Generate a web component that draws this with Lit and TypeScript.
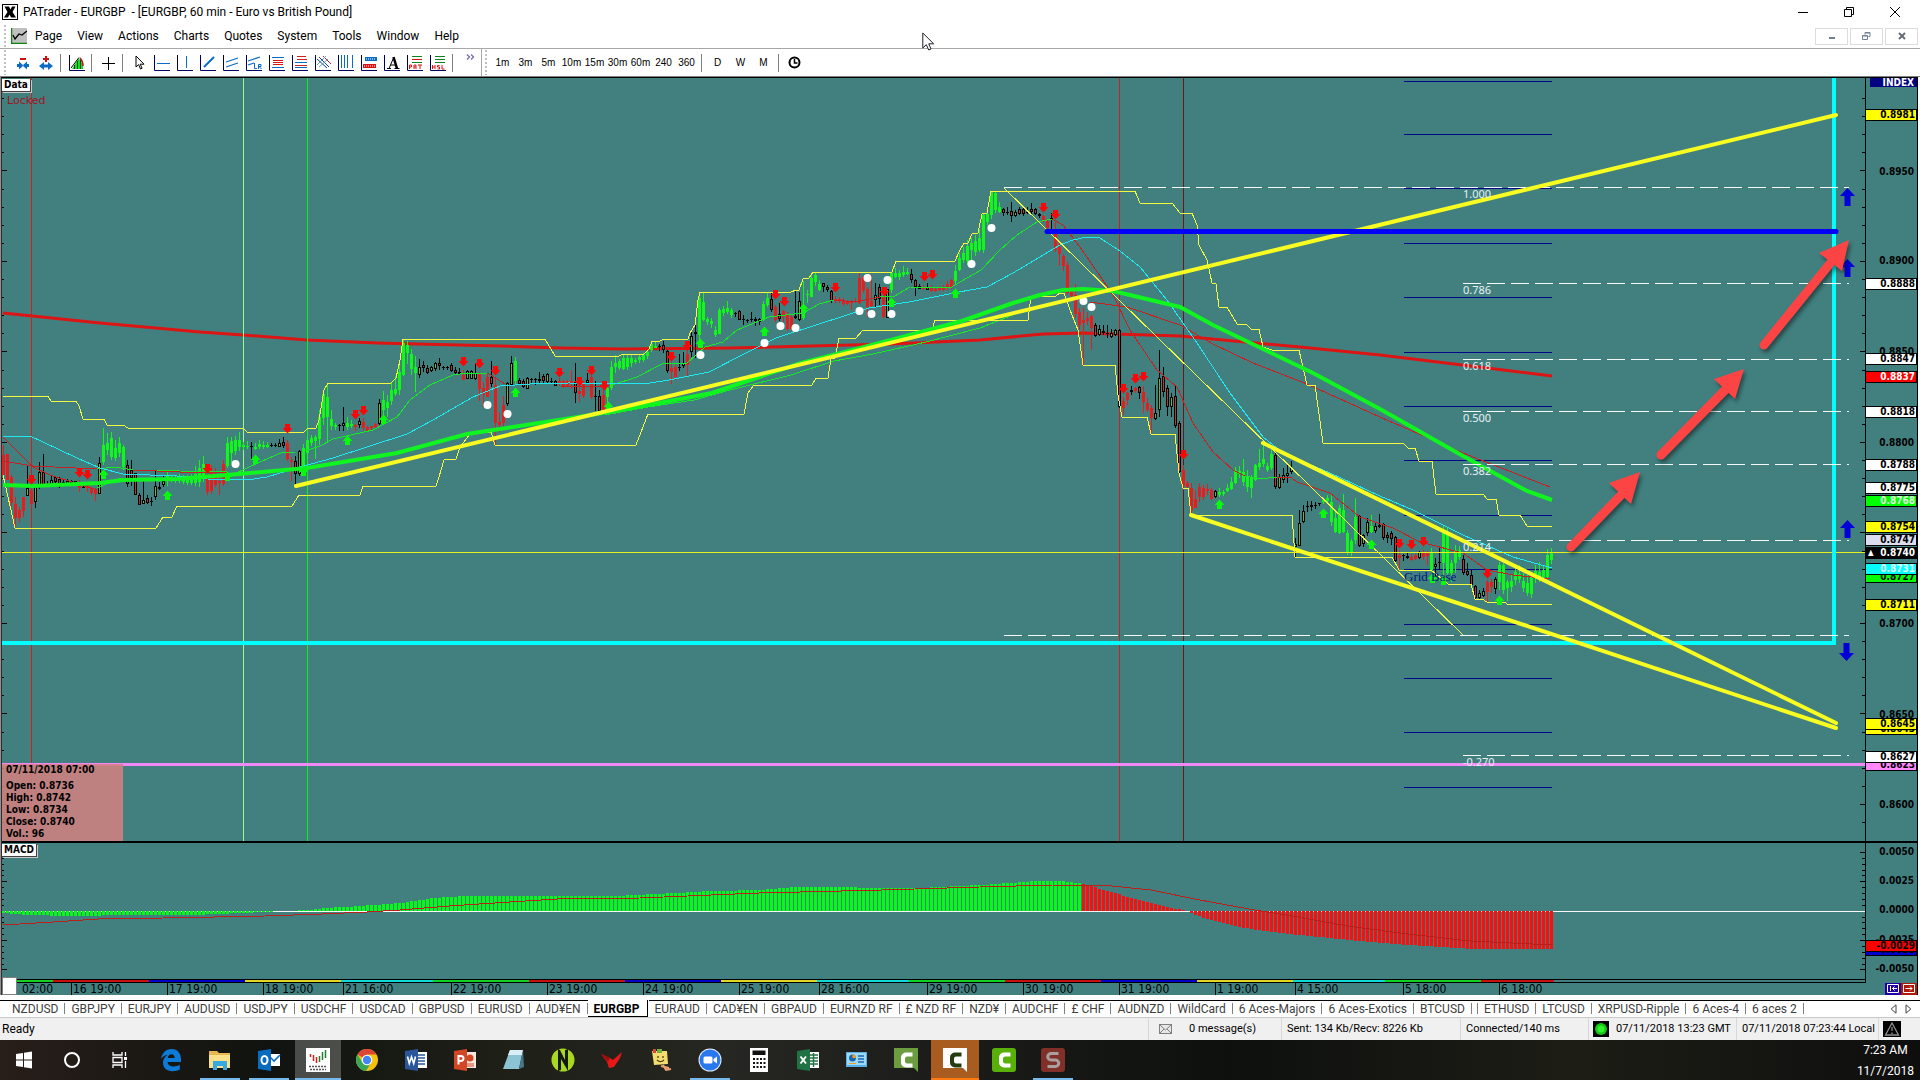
import { LitElement, html, svg, css } from "lit";
import { customElement, state } from "lit/decorators.js";

/* ---------- chart data ---------- */

// Price pane and oscillator pane share one pixel space: x 2..1865.
const X0 = 2;
const W = 1863;
const PRICE = { y: 78, h: 763 };
const MACD = { y: 843, h: 136 };

// kind, high, body top, body bottom, low. g/r = trend bars, G/R = outlined bars, K = doji.
const CANDLES = `
r445 455 475 480,r454 454 480 480,r475 477 503 507,r497 504 518 526,r507 510 518 522,r497 497 511 517,G465 488 496 496,r482 490 504 508,
G485 485 502 508,G462 472 487 489,R454 472 487 487,K481 486 487 487,G475 480 485 486,R476 477 482 486,R477 479 486 488,G479 482 484 486,
G479 481 484 486,R480 481 483 485,R481 481 484 485,r480 484 488 492,K484 487 488 488,r484 485 488 492,r487 488 493 495,r488 490 494 501,
G457 463 494 494,g428 445 462 465,g433 443 450 455,g432 438 457 460,g440 448 458 461,g437 443 453 457,g445 447 467 470,R460 465 484 487,
R460 470 478 486,R473 473 495 495,R493 495 505 505,G481 500 504 504,R495 498 503 504,K497 501 502 506,G470 486 497 500,R482 487 489 490,
G475 481 485 487,g472 476 481 486,g475 477 479 482,g475 478 480 483,g474 477 480 483,g475 478 482 484,g475 480 483 485,g474 479 483 485,
g466 474 483 486,g460 468 482 487,g456 464 478 482,r474 477 492 495,r465 472 491 494,r468 475 485 487,r475 481 483 495,r460 464 484 486,
g437 443 466 468,g437 441 453 463,g436 440 451 455,g432 440 447 451,g442 445 447 450,g441 446 447 449,K442 446 447 459,g443 447 449 450,
g440 444 447 449,g441 445 447 449,g442 445 447 448,K443 445 446 447,K443 445 446 447,G439 443 447 447,R437 442 446 448,r440 443 459 461,
r457 460 462 481,R456 461 474 486,G450 451 474 476,g444 448 469 474,g436 440 453 461,g435 438 443 446,g435 437 441 459,g410 417 439 445,
g390 394 418 425,g385 397 417 443,g410 419 426 430,g423 425 427 430,K424 425 426 431,G407 423 426 431,g417 423 427 430,g420 424 426 428,
r424 425 427 431,G418 421 425 428,r418 422 428 430,r426 427 431 432,r426 426 428 431,r423 424 427 429,G399 403 424 425,g391 400 410 424,
g395 402 408 417,g383 390 401 405,g376 389 394 396,g360 372 390 395,g339 343 375 376,g341 345 353 364,g349 354 369 375,g356 367 373 392,
G359 367 375 378,R361 365 368 372,R365 368 373 374,G366 367 371 372,G362 363 369 371,R358 363 366 370,K366 367 368 370,K366 367 368 370,
R363 365 371 372,R367 370 373 374,R368 372 374 375,r370 375 380 380,G370 371 379 379,G370 371 379 379,G364 373 379 380,r372 373 389 401,
r382 388 395 407,r374 377 397 397,R361 377 384 387,r377 385 423 446,r412 422 425 432,r396 405 423 427,G382 383 404 406,G356 363 385 386,
g357 361 381 384,R378 380 384 385,R379 381 387 388,G377 378 389 389,K378 379 380 384,K378 379 380 385,G372 379 381 384,R374 376 381 383,
G373 374 382 383,K378 381 382 383,R380 381 386 386,r378 381 384 386,r380 381 387 388,r380 381 386 387,r370 381 384 389,R363 382 393 403,
r385 391 394 402,r383 384 396 398,G373 380 383 384,r373 377 397 399,K381 396 397 411,R390 396 411 411,r387 395 410 411,g386 388 397 405,
g361 367 388 390,g355 363 367 373,g359 361 368 370,g354 358 369 370,g355 358 367 370,g355 358 363 367,g358 360 362 364,g355 357 360 363,
g353 355 360 362,g350 352 356 359,g341 344 350 352,g342 346 348 348,K344 346 347 351,R341 345 350 353,R350 351 371 373,r358 368 372 384,
r365 367 377 380,K354 367 368 371,G352 363 366 368,r350 354 365 377,G330 336 352 357,G318 332 334 358,g294 298 335 345,g293 302 320 321,
g317 319 322 325,g318 321 324 328,g326 330 335 337,g308 310 334 334,g306 309 313 316,g301 308 312 314,g308 310 315 318,K312 313 314 317,
R310 311 320 320,K315 319 320 325,K319 320 321 323,K312 319 320 322,G317 319 321 326,G318 319 322 325,g301 304 320 321,g292 298 305 307,
R292 299 310 312,r305 307 320 322,R303 314 319 321,r310 311 317 322,r312 315 329 331,r315 317 329 330,G290 316 318 319,G292 301 320 321,
g281 310 318 320,g290 294 295 303,g275 278 297 297,g273 275 282 286,g280 284 290 291,R283 283 287 292,R285 287 290 292,R290 291 301 303,
r296 299 301 303,r297 299 301 303,r298 301 304 306,r300 301 304 305,r300 302 303 310,r298 301 302 303,r272 278 303 304,r276 277 290 293,
r287 289 307 317,r275 301 306 308,G283 295 300 307,R284 287 299 305,r294 296 317 318,G289 289 318 318,g272 273 290 293,g268 273 277 278,
g270 273 277 280,g266 272 275 277,g268 272 274 275,R269 274 280 283,R279 280 287 296,R284 286 289 289,r285 287 289 290,R283 287 290 290,
r285 288 291 292,r287 289 291 292,r286 288 290 291,r285 287 290 291,r281 284 288 290,r279 280 287 289,g265 271 281 284,g253 258 270 271,
g247 253 260 263,g240 246 261 265,g238 243 250 262,g235 241 252 256,g229 238 250 252,g213 215 250 253,g213 214 222 225,g191 192 215 219,
g191 193 210 213,g202 207 212 213,R208 209 213 216,R207 212 213 215,R202 211 216 222,G210 212 216 217,R207 209 214 215,R206 209 214 216,
K207 212 213 214,R203 209 212 215,R208 209 214 215,R213 214 216 218,r215 216 221 222,r220 221 228 229,K213 218 219 232,r222 232 250 252,
r243 247 254 266,r254 256 266 271,r262 265 293 295,r288 290 296 298,r284 295 314 318,r308 312 325 330,r308 320 323 365,r312 318 321 325,
r315 316 328 350,R323 325 336 337,G325 329 335 336,R325 331 333 335,K325 333 334 338,G329 333 337 338,G329 330 335 336,R329 330 407 408,
r397 401 408 415,r392 393 400 405,G386 390 392 395,r387 388 391 393,R386 387 393 399,r386 392 402 413,r398 403 410 412,r405 408 418 433,
G385 413 419 420,G350 378 410 417,R367 376 392 397,R385 388 407 416,G393 397 407 417,R386 396 426 428,R421 423 472 473,r465 470 486 490,
r481 483 487 489,r483 488 510 513,r490 499 508 508,r483 487 497 502,r485 488 497 500,r484 489 491 495,r488 490 499 500,G490 491 497 498,
g488 492 495 497,g490 492 494 496,g484 488 491 492,g477 482 489 490,g467 470 483 484,g466 471 474 478,g459 472 482 486,g470 477 487 492,
g475 478 488 498,g464 465 480 481,g449 463 467 470,g444 459 464 467,g463 466 470 472,g450 454 468 470,R453 455 487 489,G474 477 488 489,
G468 475 480 483,G465 473 476 483,G461 468 472 474,G538 544 547 557,G510 523 546 546,G505 511 522 523,R501 506 507 512,R501 505 507 511,
K502 505 506 509,R503 503 504 506,g498 500 502 504,g495 498 501 502,g495 502 522 526,g512 518 532 533,g505 508 533 534,g494 510 532 533,
g530 533 553 555,g539 541 552 556,g498 517 540 544,R515 516 546 547,G534 535 544 547,G518 522 533 536,g515 526 532 533,G522 526 531 533,
R514 525 527 528,R523 524 538 540,R532 535 538 543,R531 533 539 545,R536 537 561 562,r550 555 558 569,K554 555 556 561,R552 556 558 559,
r554 557 560 561,r554 555 559 560,G551 552 558 559,r550 552 557 560,r551 552 556 565,g548 552 570 572,G558 564 567 576,K548 562 563 570,
g525 530 563 578,g528 533 573 575,g560 563 573 582,g545 550 563 573,g546 550 557 560,R555 559 573 575,R563 571 575 576,R570 575 585 586,
R585 586 598 600,G590 593 598 599,G588 591 596 597,r580 582 592 602,r579 582 587 593,G577 579 589 594,g562 565 582 590,g563 565 590 594,
g580 582 588 601,g575 581 587 592,g567 572 580 585,g565 574 579 583,g573 581 588 592,g575 583 593 596,g574 577 594 598,g565 571 577 583,
g562 572 577 582,g565 570 577 580,g549 555 577 579,g548 553 560 564`
  .trim()
  .split(/,\s*/)
  .map((c) => ({ kind: c[0], v: c.slice(1).split(" ").map(Number) }));

const LINES: { cls: string; pts: string }[] = [
  { cls: "ma-red", pts: "3,313 100,323 200,332 243,335 307,340 377,343 500,346 560,348 623,349 730,348 891,344 980,340 1043,334 1083,333 1180,336 1300,347 1380,355 1552,376" },
  { cls: "thin green", pts: "97,488 120,478 177,478 232,475 260,462 283,452 295,452" },
  { cls: "thin green", pts: "302,452 320,446 333,439 373,430 397,417 410,400 430,385 453,375 467,373 487,373" },
  { cls: "thin green", pts: "612,385 637,377 662,364 687,363 705,347 723,342 737,330 769,317 803,313 819,304 834,300" },
  { cls: "thin green", pts: "880,297 895,296 910,287 950,288 960,282 981,270 1000,250 1017,235 1037,222 1052,219" },
  { cls: "thin green", pts: "97,469 115,467 133,470 227,472" },
  { cls: "thin green", pts: "605,415 648,407 694,400 730,390 791,375 834,361 873,354 926,342 980,328 1030,308" },
  { cls: "thin red", pts: "3,437 33,467 50,475 97,490" },
  { cls: "thin red", pts: "3,461 33,466 97,469" },
  { cls: "thin red", pts: "133,470 180,472 227,472" },
  { cls: "thin red", pts: "487,373 491,375 505,384" },
  { cls: "thin red", pts: "560,386 605,387" },
  { cls: "thin red", pts: "834,300 855,302 880,297" },
  { cls: "thin red", pts: "1052,219 1063,225 1080,247 1113,295 1130,330 1157,370 1177,387 1193,423 1213,452 1233,470 1245,476" },
  { cls: "thin green", pts: "1245,476 1260,479 1277,477" },
  { cls: "thin red", pts: "1277,477 1292,478 1297,482 1330,493 1360,517 1393,528 1420,542 1463,553 1487,570 1513,575 1550,579" },
  { cls: "thin red", pts: "1090,302 1127,307 1180,325 1213,344 1253,363 1307,384 1380,417 1463,453 1550,487" },
  { cls: "thin cyan", pts: "3,436 30,436 43,442 77,458 100,468 123,474 177,476 207,479 247,480 267,477 300,467 333,458 367,447 407,434 433,420 473,397 500,386 530,384 569,383 644,384 669,380 709,372 744,354 776,338 819,324 869,308 909,302 959,292 987,287 1013,273 1060,245 1073,240 1087,237 1100,238 1120,251 1140,267 1167,300 1197,343 1230,393 1263,437 1283,453 1330,473 1380,496 1413,510 1463,535 1513,557 1552,568" },
  { cls: "ma-green", pts: "3,485 33,486 100,483 123,480 177,479 227,475 307,468 397,453 467,434 500,429 591,415 659,403 712,393 759,377 801,363 837,354 891,340 962,321 1013,303 1040,295 1063,290 1083,289 1113,291 1180,307 1213,325 1263,349 1313,373 1380,409 1433,439 1463,456 1527,491 1552,500" },
  { cls: "thin yellow", pts: "3,396 48,396 51,401 76,401 79,406 83,419 104,419 107,425 123,425 128,428 243,428 247,432 304,432 308,428 316,428 319,420 324,390 328,383 391,383 396,378 400,360 403,339 545,339 555,356 619,356 623,354 644,354 649,349 652,341 660,341 664,339 688,339 690,333 695,325 698,300 700,292 791,292 796,290 799,290 803,279 809,278 813,272 892,272 896,261 955,261 960,250 964,243 968,243 972,234 978,233 982,214 987,213 991,191 1135,191 1140,203 1172,203 1180,213 1192,213 1197,225 1199,245 1207,260 1212,283 1216,284 1219,307 1227,307 1237,324 1247,325 1251,329 1259,329 1263,347 1272,350 1299,350 1307,385 1315,385 1323,443 1403,443 1408,448 1415,448 1419,461 1432,461 1436,494 1483,494 1487,499 1496,499 1499,515 1520,515 1527,526 1552,526" },
  { cls: "thin yellow", pts: "3,475 15,528 156,528 163,517 172,517 177,506 292,506 299,495 360,495 363,486 436,486 439,477 444,460 456,459 460,447 470,434 491,432 495,445 636,445 648,414 744,414 748,393 754,385 812,385 816,378 828,378 831,358 835,358 839,338 856,338 863,330 932,330 935,320 1028,320 1031,296 1056,296 1060,293 1064,293 1070,310 1078,330 1083,365 1115,365 1118,395 1122,417 1147,417 1151,434 1175,434 1179,473 1183,488 1188,488 1191,515 1292,515 1295,557 1392,557 1399,570 1431,570 1448,584 1471,584 1475,599 1482,599 1487,602 1505,602 1507,604 1552,604" },
  { cls: "thin fan", pts: "1004,188 1463,635" },
];

const DOWN = [[31,479],[79,472],[87,474],[207,468],[287,428],[355,414],[363,410],[463,361],[479,363],[495,370],[559,372],[579,381],[591,370],[604,385],[671,356],[687,345],[775,294],[784,301],[835,287],[884,291],[924,276],[932,274],[1043,207],[1055,214],[1123,388],[1135,378],[1143,376],[1183,454],[1399,543],[1411,544],[1423,541],[1487,573]];
const UP = [[103,474],[167,495],[227,476],[255,459],[303,471],[347,440],[383,419],[515,392],[608,406],[700,343],[764,331],[803,308],[891,302],[955,293],[1219,504],[1323,513],[1371,544],[1432,578],[1443,580],[1499,600]];
const DOTS = [[235,464],[487,405],[507,414],[700,355],[764,343],[780,326],[795,328],[867,278],[859,311],[871,314],[891,314],[887,280],[971,264],[991,228],[1083,301],[1091,307]];

const GRID = [81,134,188,243,297,352,406,460,515,569,624,678,732,787];
const FIBS: [string, number, number][] = [
  ["1.000", 187, 1004], ["0.786", 283, 1463], ["0.618", 359, 1463], ["0.500", 411, 1463],
  ["0.382", 464, 1463], ["0.214", 540, 1463], ["", 635, 1004], ["-0.270", 755, 1463],
];

const SCALE: [string, number][] = [
  ["0.8950", 172], ["0.8900", 261], ["0.8850", 352], ["0.8800", 443],
  ["0.8700", 624], ["0.8650", 715], ["0.8600", 805],
];
const TAGS: [string, number, string][] = [
  ["0.8981", 115, "yellow"], ["0.8888", 284, "white"], ["0.8847", 359, "white"], ["0.8837", 377, "red"],
  ["0.8818", 412, "white"], ["0.8788", 465, "white"], ["0.8775", 488, "white"], ["0.8768", 501, "lime"],
  ["0.8754", 527, "yellow"], ["0.8747", 540, "pale"], ["0.8740", 553, "black"], ["0.8727", 577, "green"],
  ["0.8731", 569, "cyan"], ["0.8711", 605, "yellow"], ["0.8643", 729, "yellow"], ["0.8645", 724, "yellow"],
  ["0.8623", 765, "pink"], ["0.8627", 757, "white"],
];
const MACD_SCALE: [string, number][] = [["0.0050", 852], ["0.0025", 881], ["0.0000", 910], ["-0.0025", 940], ["-0.0050", 969]];
const MACD_TAGS: [string, number, string][] = [["-0.0033", 950, "blue"], ["-0.0029", 946, "redk"]];

const HIST = [[3,913],[25,915],[70,916],[130,915],[190,915],[240,913],[262,912],[285,911],[310,910],[322,908],[345,907],[400,903],[433,898],[461,896],[612,896],[673,893],[710,891],[759,890],[796,887],[918,888],[980,885],[1035,881],[1060,881],[1083,884],[1102,890],[1127,897],[1163,906],[1185,911],[1200,917],[1225,924],[1249,929],[1298,935],[1347,940],[1408,945],[1470,949],[1552,949]];
const SIGNAL = "3,925 53,922 98,919 163,918 265,916 322,914 367,912 400,910 449,906 510,902 557,899 640,898 759,893 882,890 980,887 1053,885 1102,885 1151,890 1200,900 1249,909 1298,917 1347,926 1408,934 1470,941 1552,945";
const histAt = (x: number) => {
  let i = 1;
  while (i < HIST.length - 1 && HIST[i][0] < x) i++;
  const [x1, y1] = HIST[i - 1];
  const [x2, y2] = HIST[i];
  return Math.round(y1 + ((y2 - y1) * (x - x1)) / (x2 - x1));
};

const DAYS: [string, number][] = [
  ["#10d020", 53], ["#c81010", 149], ["#0000c8", 245], ["#e0d820", 341], ["#10d8d8", 433], ["#10d020", 529],
  ["#c81010", 625], ["#0000c8", 721], ["#e0d820", 817], ["#10d8d8", 909], ["#10d020", 1005], ["#c81010", 1101],
  ["#0000c8", 1197], ["#e0d820", 1293], ["#10d8d8", 1385], ["#10d020", 1481], ["#c81010", 1554],
];
const TIMES: [string, number][] = [
  ["02:00", 20], ["16 19:00", 71], ["17 19:00", 167], ["18 19:00", 263], ["21 16:00", 343], ["22 19:00", 451],
  ["23 19:00", 547], ["24 19:00", 643], ["25 19:00", 739], ["28 16:00", 819], ["29 19:00", 927], ["30 19:00", 1023],
  ["31 19:00", 1119], ["1 19:00", 1215], ["4 15:00", 1295], ["5 18:00", 1403], ["6 18:00", 1499],
];

const TABS = ["NZDUSD","GBPJPY","EURJPY","AUDUSD","USDJPY","USDCHF","USDCAD","GBPUSD","EURUSD","AUD¥EN","EURGBP","EURAUD","CAD¥EN","GBPAUD","EURNZD RF","£ NZD RF","NZD¥","AUDCHF","£ CHF","AUDNZD","WildCard","6 Aces-Majors","6 Aces-Exotics","BTCUSD","","ETHUSD","LTCUSD","XRPUSD-Ripple","6 Aces-4","6 aces 2"];

const px = (x: number) => `${((x - X0) / W) * 100}%`;
const py = (p: { y: number; h: number }, y: number) => `${((y - p.y) / p.h) * 100}%`;

/* ---------- icons ---------- */

const axis = svg`<path d="M.5 0V15.500H16" fill="none" stroke="#000060"/>`;
const ic = (body: unknown) => html`<svg class="i16" viewBox="0 0 16 16" aria-hidden="true">${body}</svg>`;
const TOOLS: [string, unknown][] = [
  ["Compress bars", ic(svg`<rect x="5" y="3" width="6" height="2" fill="#d01010"/><path d="M2 10.500h4M10 10.500h4" stroke="#0a6cc8" stroke-width="3"/><path d="M4 6.500v8l4.500-4zM12 6.500v8l-4.500-4z" fill="#0a6cc8"/>`)],
  ["Expand bars", ic(svg`<path d="M8 1v6M5 4h6" stroke="#d01010" stroke-width="2"/><path d="M4 11h8" stroke="#0a6cc8" stroke-width="3"/><path d="M6 7v8l-5-4zM10 7v8l5-4z" fill="#0a6cc8"/>`)],
  ["|", null],
  ["Indicators", ic(svg`${axis}<path d="M3 14L9 4c3 0 4 3 5 7v3z" fill="#10e020"/><path d="M2 13L10 2.500" stroke="#000" fill="none"/><path d="M5.500 14V10M8.500 14V6M11.500 14V5" stroke="#084010"/><path d="M11 3c2 2 3 5 3 8" stroke="#c01010" fill="none" stroke-width="1.500"/>`)],
  ["|", null],
  ["Crosshair", ic(svg`<path d="M8.500 2v13M2 8.500h13" stroke="#000"/>`)],
  ["|", null],
  ["Pointer", ic(svg`<path d="M5 1v11l2.600-2.400L9.500 14l1.600-.8-1.900-4H13z" fill="#fff" stroke="#000"/>`)],
  ["Horizontal line", ic(svg`${axis}<path d="M3 8.500h13" stroke="#0a6cc8"/>`)],
  ["Vertical line", ic(svg`${axis}<path d="M9.500 1v12" stroke="#0a6cc8"/>`)],
  ["Trend line", ic(svg`${axis}<path d="M4 12L14 2" stroke="#0a6cc8" stroke-width="2"/>`)],
  ["Channel", ic(svg`${axis}<path d="M3 7l12-4M3 12l12-4" stroke="#0a6cc8" stroke-width="1.200"/>`)],
  ["Linear regression", ic(svg`${axis}<path d="M2 6l12-4M2 10l6-2" stroke="#0a6cc8" stroke-width="1.200"/><path d="M8.500 8v5.500h2.500M12.500 14V9.500h2.500v2h-2l2.500 2.500" fill="none" stroke="#0a6cc8"/>`)],
  ["Fibonacci retracement", ic(svg`${axis}<path d="M3 2.500h12M3 12.500h12" stroke="#0a6cc8"/><path d="M4 5.500h10M4 7.500h10M4 9.500h10" stroke="#e01010"/>`)],
  ["Fibonacci extension", ic(svg`${axis}<path d="M5 1.500h9M5 4.500h10M3 10.500h12" stroke="#d02020"/><path d="M3 7.500h12M3 12.500h12" stroke="#0a6cc8"/>`)],
  ["Fan", ic(svg`${axis}<path d="M2 4l10 9M4 2l10 10" stroke="#1040a0"/><path d="M8 1l8 8" stroke="#c02020"/><path d="M2 10L11 1M4 12L13 4" stroke="#60a0d8"/>`)],
  ["Time zones", ic(svg`${axis}<path d="M3.500 0v13M6.500 0v13M9.500 0v13M14.500 0v13" stroke="#0a6cc8"/>`)],
  ["Zones", ic(svg`${axis}<rect x="4" y="2" width="12" height="4" fill="#0a6cc8"/><path d="M5 4h10" stroke="#fff" stroke-dasharray="1 1"/><rect x="2" y="9" width="13" height="4" fill="#e01010"/><path d="M3 11h11" stroke="#fff" stroke-dasharray="1 1"/>`)],
  ["Text", ic(svg`${axis}<path d="M5 13.500L9.500 3M6.500 10h5" fill="none" stroke="#000"/><path d="M9.500 2l3.500 11.500" stroke="#000" stroke-width="2.500"/><path d="M3 13.500h4M10.500 13.500h5" stroke="#000"/>`)],
  ["PAT levels", ic(svg`${axis}<path d="M5 1.500h10M5 7.500h10" stroke="#108020"/><path d="M5 4.500h10" stroke="#d01010"/><path d="M2.500 14v-4h2v2h-2M7 14v-4h2v4M7 12h2M11 10h4M13 10v4" fill="none" stroke="#e01010"/>`)],
  ["HSL levels", ic(svg`${axis}<path d="M5 1.500h10M5 4.500h10M5 7.500h10" stroke="#108020"/><path d="M2.500 10v4M5 10v4M2.500 12h2.500M9.500 10.500h-2v1.500h2v2h-2M12 10v4h2.500" fill="none" stroke="#e01010"/>`)],
  ["|", null],
];

const t24 = (body: unknown) => html`<svg class="i24" viewBox="0 0 24 24" aria-hidden="true">${body}</svg>`;
const camC = (c: string) => svg`<path d="M18.500 4.500H12a5 5 0 0 0-5 5v5a5 5 0 0 0 5 5h6.500v-4h-5.300a2.200 2.200 0 0 1-2.200-2.200v-2.600a2.200 2.200 0 0 1 2.200-2.200h5.300z" fill="${c}"/>`;
const APPS: [string, string, unknown][] = [
  ["Start", "sys", t24(svg`<path d="M4 6l7-1v6.500H4zM12 4.800L20 3.600v7.900h-8zM4 12.500h7V19l-7-1zM12 12.500h8v7.900l-8-1.200z" fill="#fff"/>`)],
  ["Search", "sys", t24(svg`<circle cx="12" cy="12" r="7" fill="none" stroke="#fff" stroke-width="2"/>`)],
  ["Task view", "sys last", t24(svg`<path d="M5 4v3h9V4M5 20v-3h9v3M5 9.500h9v5H5zM17.500 4v4M17.500 13v7" fill="none" stroke="#fff" stroke-width="1.300"/><rect x="16" y="9" width="3" height="3" fill="#fff"/>`)],
  ["Edge", "", t24(svg`<path d="M2 11C3 5 7 1 12.500 1 19 1 22 6 22 11v3H8.500c.3 3 3 4.500 6 4.500 2.500 0 4.700-.7 6.300-1.700v4.700c-2 1-4.500 1.700-7.300 1.700C8 23.200 4 20 4 14.500c0-3 1.700-5.800 4.500-7.400C5.500 7.200 3.200 9 2 11zm6.700-1h7c0-2.200-1.200-3.700-3.300-3.700-2 0-3.300 1.600-3.700 3.700z" fill="#0c7cd8"/>`)],
  ["File Explorer", "run", t24(svg`<path d="M1 3h8l2 2h11v14H1z" fill="#e8b850"/><path d="M1 7h21v13H1z" fill="#fbe08c"/><path d="M5 22v-9h14v9h-4v-4H9v4z" fill="#38a8e0"/>`)],
  ["Outlook", "run", t24(svg`<rect x="11" y="6" width="12" height="12" fill="#fff"/><path d="M12 8l5 5 6-6" fill="none" stroke="#0a6cc8" stroke-width="1.600"/><path d="M1 3l13-2v22L1 21z" fill="#0a6cc0"/><ellipse cx="7.500" cy="12" rx="3" ry="4" fill="none" stroke="#fff" stroke-width="2"/>`)],
  ["PATrader", "active run", t24(svg`<rect width="24" height="24" fill="#fff"/><path d="M4.500 6v3M7.500 7v6M10.500 9v6" stroke="#d02020" stroke-width="1.500"/><path d="M13.500 8v6M16.500 4v8M19.500 2v8" stroke="#208030" stroke-width="1.500"/><path d="M3 18.500h18M4 21.500h16" stroke="#555" stroke-width="1.400" stroke-dasharray="2 1"/>`)],
  ["Chrome", "", t24(svg`<circle cx="12" cy="12" r="11" fill="#f4c20d"/><path d="M12 12L2.500 6.500A11 11 0 0 1 21.600 6.600H12z" fill="#db4437"/><path d="M2.500 6.500A11 11 0 0 0 11 23l5-8.500-8.500 0z" fill="#3aa757"/><circle cx="12" cy="12" r="5.300" fill="#fff"/><circle cx="12" cy="12" r="4.200" fill="#4285f4"/>`)],
  ["Word", "", t24(svg`<rect x="11" y="4" width="12" height="16" fill="#fff"/><path d="M13 7h8M13 10h8M13 13h8M13 16h8" stroke="#2b579a" stroke-width="1.400"/><path d="M1 3l13-2v22L1 21z" fill="#2b579a"/><path d="M3.500 8.500L5.300 15.500 7.500 9l2.200 6.500 1.800-7" fill="none" stroke="#fff" stroke-width="1.600"/>`)],
  ["PowerPoint", "", t24(svg`<rect x="11" y="4" width="12" height="16" fill="#f8e8e0"/><circle cx="17" cy="10" r="3.500" fill="#d24726"/><path d="M14 16h7M14 18h7" stroke="#d24726"/><path d="M1 3l13-2v22L1 21z" fill="#d24726"/><path d="M5.500 16.500V8H8a2.500 2.500 0 0 1 0 5H5.500" fill="none" stroke="#fff" stroke-width="2"/>`)],
  ["Notepad", "", t24(svg`<path d="M8 2h13l-4 19H1z" fill="#8cc4d4"/><path d="M8 2h13l-1 5H6z" fill="#d8eef4"/><path d="M21 2l1 17-5 2z" fill="#487888"/>`)],
  ["NinjaTrader", "", t24(svg`<circle cx="12" cy="12" r="11.500" fill="#a8d820"/><path d="M7 1v22l3-1V11l7 12V1l-3 1v10L9 2z" fill="#141810"/>`)],
  ["Red Bird", "", t24(svg`<path d="M1 6l9 4 3 2 9-8-2 6-6 9-5 1-2-6z" fill="#e81818"/><path d="M1 6l9 4-2 4z" fill="#a00c0c"/>`)],
  ["Sticky Notes", "", t24(svg`<path d="M3 3h15l1 13-14 1z" fill="#f4dc70"/><path d="M8 1h5v4H8z" fill="#70b040"/><path d="M4 1h3v4H4z" fill="#d84830"/><path d="M9 8v2M14 8v2M8 12c2 2 5 2 7 0" stroke="#504010" fill="none" stroke-width="1.300"/><path d="M14 17l3 5 5-1M12 18l8 2" stroke="#e8a070" stroke-width="2" fill="none"/>`)],
  ["Zoom", "run", t24(svg`<circle cx="12" cy="12" r="11.500" fill="#e8f0ff"/><circle cx="12" cy="12" r="10.500" fill="#2878f0"/><rect x="5.500" y="8.500" width="9" height="7" rx="1.500" fill="#fff"/><path d="M15.500 11l3.500-2.500v7L15.500 13z" fill="#fff"/>`)],
  ["Calculator", "", t24(svg`<path d="M3 0h18v24H3z" fill="#fff"/><path d="M5.500 2.500h13V7h-13z" fill="#111"/><path d="M6 11h13M6 15h13M6 19h13" stroke="#111" stroke-width="2" stroke-dasharray="2 1.500"/>`)],
  ["Excel", "", t24(svg`<rect x="11" y="4" width="12" height="16" fill="#fff"/><path d="M13 7h9M13 10h9M13 13h9M13 16h9M17.500 5v14" stroke="#217346" stroke-width="1.400"/><path d="M1 3l13-2v22L1 21z" fill="#217346"/><path d="M4.500 8.500l5.500 7M10 8.500l-5.500 7" stroke="#fff" stroke-width="1.900"/>`)],
  ["Control Panel", "", t24(svg`<rect x="1" y="4" width="21" height="15" fill="#58b0e8"/><rect x="2" y="5" width="19" height="12" fill="#a0d8f8"/><circle cx="7.500" cy="10" r="3.500" fill="#1868b0"/><path d="M7.500 10V6.500A3.500 3.500 0 0 1 11 10z" fill="#f0a020"/><path d="M13 8h6M13 11h6M13 14h6" stroke="#1868b0" stroke-width="1.300"/><path d="M4 15.500h7" stroke="#f0a020"/>`)],
  ["Camtasia 8", "", t24(svg`<path d="M0 0h24v24l-4-4H0z" fill="#6c9c40"/>${camC("#fff")}`)],
  ["Camtasia Recorder", "rec", t24(svg`<path d="M0 0h24v24l-4-4H0z" fill="#fff"/>${camC("#243c10")}`)],
  ["Camtasia", "", t24(svg`<rect width="24" height="24" rx="3" fill="#58b008"/>${camC("#fff")}`)],
  ["Snagit", "run", t24(svg`<rect width="24" height="24" rx="3" fill="#803028"/><path d="M17.500 5.500H10A3 3 0 0 0 10 12h4.500a2.800 2.800 0 0 1 0 6.500H6.500" fill="none" stroke="#a8a0a0" stroke-width="3"/>`)],
];

/* ---------- chart element ---------- */

@customElement("price-chart")
class PriceChart extends LitElement {
  static styles = css`
    :host { display: flex; flex-direction: column; min-height: 0; background: #428080; border: 1px solid #000; border-bottom: 0; border-left-color: #303030;
      box-sizing: border-box; font: bold 10px/12px "DejaVu Sans Condensed", "DejaVu Sans", sans-serif; color: #000; }
    .pane { display: flex; min-height: 0; flex-basis: 0; border-bottom: 2px solid #000; }
    .price { flex-grow: 763; }
    .macd { flex-grow: 136; border-bottom: 0; }
    .plot { position: relative; flex: 1; min-width: 0; overflow: hidden; }
    .plot > svg { position: absolute; inset: 0; width: 100%; height: 100%; display: block; }
    .axis { position: relative; flex: 0 0 52px; border-left: 1px solid #000; box-sizing: border-box; overflow: hidden; }
    .num, .tag { position: absolute; right: 0; height: 12px; margin-top: -6px; text-align: right; }
    .num { right: 3px; }
    .tag { left: 0; padding-right: 1px; box-sizing: border-box; border: 1px solid #000; border-left: 0; line-height: 10px; background: #fff; }
    .yellow { background: #ff0; } .red { background: #f00; color: #fff; } .lime { background: #0f0; color: #e0ffe0; }
    .pale { background: #dcdcf0; } .black { background: #000; color: #fff; } .green { background: #0f0; }
    .cyan { background: #0ff; color: #e0ffff; } .pink { background: #f8f; } .blue { background: #00c; } .redk { background: #f00; }
    .up { float: left; padding-left: 2px; font-size: 8px; }
    .index { position: absolute; top: 0; right: 0; left: 4px; height: 9px; line-height: 9px; padding-right: 3px; text-align: right; background: #000080; color: #fff; }
    .badge { position: absolute; left: 0; top: 1px; padding: 0 2px; height: 12px; background: #fff; border-right: 1px solid #404040; border-bottom: 1px solid #404040; box-shadow: 1px 1px #c8c8c8; }
    .locked { position: absolute; left: 5px; top: 16px; font: 11px/13px "DejaVu Sans", sans-serif; color: #a01420; }
    .fib { position: absolute; font: 11px/13px "Noto Sans", sans-serif; color: #e8f0f0; }
    .gridname { position: absolute; font: 13px/14px "Liberation Serif", serif; color: #001880; }
    .ohlc { position: absolute; left: 0; bottom: 0; width: 121px; box-sizing: border-box; padding: 0 4px 1px; background: rgba(208, 128, 128, 0.88); margin: 0; }
    .ohlc p { margin: 0; }
    .ohlc .when { margin-bottom: 4px; }
    .band { position: relative; height: 2px; border: 1px solid #000; border-width: 1px 1px 1px 0; margin-right: 51px; }
    .band svg { display: block; width: 100%; height: 100%; }
    .times { display: flex; height: 12px; }
    .slots { position: relative; flex: 1; font: 12px/12px "DejaVu Sans Condensed", "Noto Sans", sans-serif; }
    .slot { position: absolute; top: 0; bottom: 0; padding-left: 1px; border-left: 1px solid #000; white-space: nowrap; }
    .slot:nth-child(1) { border-left-color: transparent; }
    .nav { display: flex; flex: 0 0 32px; }
    .nav button { width: 16px; height: 12px; padding: 0; border: 0; background: #2000a0; }
    .nav button + button { background: #b01808; }
    .nav svg { display: block; width: 16px; height: 12px; }
    .thumb { position: absolute; left: 0; bottom: 0; width: 15px; height: 18px; background: #fff; border: 1px solid #808080; box-sizing: border-box; }
    polyline { fill: none; vector-effect: non-scaling-stroke; }
    .thin { stroke-width: 1; }
    .thin.green { stroke: #18e828; } .thin.red { stroke: #c82020; } .thin.cyan { stroke: #20e8f0; }
    .thin.yellow, .thin.fan { stroke: #f4f840; background: none; }
    .ma-red { stroke: #dc1414; stroke-width: 3; } .ma-green { stroke: #10f420; stroke-width: 4; }
    .trend { stroke: #f8fc20; stroke-width: 4; stroke-linecap: round; }
    .crisp { shape-rendering: crispEdges; }
    .big { filter: drop-shadow(2px 3px 2px rgba(0, 0, 0, 0.45)); }
  `;

  private candle(c: { kind: string; v: number[] }, k: number) {
    const [h, t, b, l] = c.v;
    const x = 2 + 4 * k;
    const trend = c.kind === "g" ? "#10f818" : c.kind === "r" ? "#e81c1c" : "#000";
    const inner = c.kind === "G" ? "#38c848" : "#c83030";
    return svg`<rect x=${x + 1} y=${h} width="1" height=${Math.max(1, l - h)} fill=${trend}></rect>
      <rect x=${x} y=${t} width="3" height=${Math.max(1, b - t)} fill=${trend}></rect>
      ${(c.kind === "G" || c.kind === "R") && b - t > 2
        ? svg`<rect x=${x + 1} y=${t + 1} width="1" height=${b - t - 2} fill=${inner}></rect>` : null}`;
  }

  private ticks(ys: number[], long: (i: number) => boolean) {
    return ys.map((y, i) => svg`<rect x="2" y=${y} width=${long(i) ? 5 : 2} height="1"></rect>
      <rect x=${long(i) ? 1860 : 1862} y=${y} width=${long(i) ? 5 : 3} height="1"></rect>`);
  }

  render() {
    const pTicks = Array.from({ length: 41 }, (_, i) => Math.round(98 + i * 18.1)).filter((y) => y < 841);
    const mTicks = Array.from({ length: 22 }, (_, i) => Math.round(852 + i * 5.87)).filter((y) => y < 975);
    const bars = Array.from({ length: 388 }, (_, k) => k);
    return html`
      <div class="pane price">
        <div class="plot">
          <svg viewBox="2 78 1863 763" preserveAspectRatio="none" role="img" aria-label="EURGBP 60 minute candles">
            <g class="crisp">
              ${this.ticks(pTicks, (i) => i % 5 === 4)}
              ${GRID.map((y) => svg`<rect x="1404" y=${y} width="148" height="1" fill="#000888"></rect>`)}
            </g>
            ${LINES.filter((l) => l.cls === "ma-red").map((l) => svg`<polyline class=${l.cls} points=${l.pts}></polyline>`)}
            <g class="crisp">
              <rect x="31" y="78" width="1" height="763" fill="#d02020"></rect>
              <rect x="243" y="78" width="1" height="763" fill="#90ff90"></rect>
              <rect x="307" y="78" width="1" height="763" fill="#10f020"></rect>
              <rect x="1119" y="78" width="1" height="763" fill="#b82828"></rect>
              <rect x="1183" y="78" width="1" height="763" fill="#681818"></rect>
              ${CANDLES.map((c, k) => this.candle(c, k))}
              ${LINES.filter((l) => l.cls.startsWith("thin")).map((l) => svg`<polyline class=${l.cls} points=${l.pts}></polyline>`)}
            </g>
            ${LINES.filter((l) => l.cls === "ma-green").map((l) => svg`<polyline class=${l.cls} points=${l.pts}></polyline>`)}
            <g class="crisp">
              <rect x="2" y="552" width="1863" height="1" fill="#e8f020"></rect>
              <path d="M2 643H1834V78" fill="none" stroke="#00ffff" stroke-width="4"></path>
              ${FIBS.map((f) => svg`<path d=${`M${f[2]} ${f[1]}.5H1849`} stroke="#f4f8f8" stroke-dasharray="18 6"></path>`)}
            </g>
            ${DOWN.map(([x, y]) => svg`<path transform=${`translate(${x} ${y})`} d="M-2-4h5v4h2.500L.5 5.500-4.500 0H-2z" fill="#f80808"></path>`)}
            ${UP.map(([x, y]) => svg`<path transform=${`translate(${x} ${y})`} d="M-2 5h5V1h2.500L.5-4.500-4.500 1H-2z" fill="#08f810"></path>`)}
            ${DOTS.map(([x, y]) => svg`<circle cx=${x + 0.5} cy=${y} r="4" fill="#fff"></circle>`)}
            <path d="M296 486L1836 115M1263 443L1836 723M1191 515L1836 728" fill="none" class="trend"></path>
            <path d="M1047 231.500H1836" stroke="#0000f8" stroke-width="5" stroke-linecap="round"></path>
            <rect x="2" y="763" width="1863" height="3" fill="#f088f8"></rect>
            ${[188, 259, 520].map((y) => svg`<path transform=${`translate(1847.5 ${y})`} d="M0 0l7.500 8H3v10h-6V8h-4.500z" fill="#0000d8"></path>`)}
            <path d="M1843.500 643h6v10h4.500l-7.500 8-7.500-8h4.500z" fill="#0000d8"></path>
            <g class="big" fill="#fc4444" stroke="#fc4444" stroke-linecap="round">
              <path d="M1571 547L1623 493" stroke-width="9"></path><path d="M1640 472L1609 483 1631 504z" stroke="none"></path>
              <path d="M1661 455L1727 388" stroke-width="9"></path><path d="M1744 369L1714 379 1735 399z" stroke="none"></path>
              <path d="M1764 345L1832 261" stroke-width="9"></path><path d="M1849 240L1819 253 1842 271z" stroke="none"></path>
            </g>
          </svg>
          <span class="badge">Data</span>
          <span class="locked">Locked</span>
          ${FIBS.map((f) => f[0] ? html`<span class="fib" style="left:${px(1463)};top:${py(PRICE, f[1])}">${f[0]}</span>` : null)}
          <span class="gridname" style="left:${px(1404)};top:${py(PRICE, 570)}">Grid Base</span>
          <div class="ohlc">
            <p class="when">07/11/2018 07:00</p>
            <p>Open: 0.8736</p><p>High: 0.8742</p><p>Low: 0.8734</p><p>Close: 0.8740</p><p>Vol.: 96</p>
          </div>
        </div>
        <div class="axis">
          <span class="index">INDEX</span>
          ${SCALE.map(([t, y]) => html`<span class="num" style="top:${py(PRICE, y)}">${t}</span>`)}
          ${TAGS.map(([t, y, c]) => html`<span class="tag ${c}" style="top:${py(PRICE, y)}">${c === "black" ? html`<span class="up">▲</span>` : null}${t}</span>`)}
        </div>
      </div>
      <div class="pane macd">
        <div class="plot">
          <svg viewBox="2 843 1863 136" preserveAspectRatio="none" role="img" aria-label="MACD histogram">
            <g class="crisp">
              ${this.ticks(mTicks, (i) => i % 5 === 0)}
              <rect x="2" y="911" width="1863" height="1" fill="#f8f8f8"></rect>
              ${bars.map((k) => {
                const x = 2 + 4 * k;
                const y = histAt(x);
                return y === 911 ? null : svg`<rect x=${x} y=${Math.min(y, 911)} width="3" height=${Math.abs(911 - y)} fill=${x < 1082 ? "#08f818" : "#f81010"}></rect>`;
              })}
              <polyline points=${SIGNAL} stroke="#b82018"></polyline>
            </g>
          </svg>
          <span class="badge">MACD</span>
        </div>
        <div class="axis">
          ${MACD_SCALE.map(([t, y]) => html`<span class="num" style="top:${py(MACD, y)}">${t}</span>`)}
          ${MACD_TAGS.map(([t, y, c]) => html`<span class="tag ${c}" style="top:${py(MACD, y)}">${t}</span>`)}
        </div>
      </div>
      <div class="band">
        <svg class="crisp" viewBox="2 0 1863 2" preserveAspectRatio="none" aria-hidden="true">
          ${DAYS.map(([c, end], i) => { const s = i ? DAYS[i - 1][1] : 17; return svg`<rect x=${s} y="0" width=${end - s} height="2" fill=${c}></rect>`; })}
        </svg>
      </div>
      <div class="times">
        <div class="slots">${TIMES.map(([t, x]) => html`<span class="slot" style="left:${`${((x - X0) / (W + 20)) * 100}%`}">${t}</span>`)}<span class="thumb"></span></div>
        <div class="nav">
          <button aria-label="Scroll to start"><svg viewBox="0 0 16 12"><path d="M2.500 1.500h11v8h-11zM5.500 3v5M12 5.500H7.500M9.500 3.500l-2 2 2 2" fill="none" stroke="#fff"/></svg></button>
          <button aria-label="Scroll to end"><svg viewBox="0 0 16 12"><path d="M2.500 1.500h11v8h-11zM4.500 5.500H11M9 3.500l2 2-2 2" fill="none" stroke="#fff"/></svg></button>
        </div>
      </div>`;
  }
}

/* ---------- application shell ---------- */

@customElement("app-root")
class AppRoot extends LitElement {
  @state() private tab = "EURGBP";

  static styles = css`
    :host { display: flex; flex-direction: column; height: 100vh; min-height: 480px; overflow: hidden; position: relative;
      background: #fff; color: #000; font: 12px/16px Roboto, "Open Sans", sans-serif; }
    button { font: inherit; color: inherit; background: none; border: 0; padding: 0; margin: 0; }
    svg { display: block; }
    .i16 { width: 16px; height: 16px; }
    .i24 { width: 24px; height: 24px; }
    .title { display: flex; align-items: center; height: 24px; padding-left: 2px; gap: 5px; }
    .title h1 { margin: 0; font: inherit; white-space: pre; flex: 1; }
    .title button { width: 46px; height: 20px; display: grid; place-items: center; }
    .title .ctl { display: flex; padding-right: 2px; }
    .menu { display: flex; align-items: center; height: 24px; border-bottom: 1px solid #a8a8a8; padding-left: 4px; }
    .grip { width: 2px; align-self: stretch; margin: 1px 0; background: repeating-linear-gradient(#c0c0c0 0 2px, #fff 2px 4px); }
    .menu .logo { margin: 0 8px 0 5px; }
    .menu nav { display: flex; gap: 15px; flex: 1; }
    .child { display: flex; gap: 2px; padding-right: 2px; }
    .child button { box-sizing: border-box; width: 33px; height: 17px; border: 1px solid #dcdcdc; display: grid; place-items: center; }
    .tools { display: flex; align-items: center; height: 27px; padding-left: 4px; border-bottom: 1px solid #808080; }
    .tools .set { display: flex; align-items: center; }
    .tools .draw { margin-left: 5px; }
    .tools button { width: 23px; height: 23px; display: grid; place-items: center; }
    .tools .sep { width: 1px; height: 18px; background: #808080; margin: 0 4px 0 3px; }
    .tools .more { align-self: flex-start; margin: 4px 3px 0 5px; width: 16px; height: 8px; }
    .tools .end { width: 1px; align-self: stretch; background: #a8a8a8; margin-right: 3px; }
    .tools .frames { margin-left: 4px; font: 10px/16px "Liberation Sans", sans-serif; }
    .chart { flex: 1; margin: 0 2px 0 1px; box-shadow: -1px 0 #909090; }
    .tabs { display: flex; height: 17px; margin-top: 5px; border-bottom: 1px solid #c8c8c8; color: #404040; }
    .lead { width: 6px; border-top: 1px solid #000; }
    .tabs [role="tab"] { position: relative; padding: 0 7px 0 6px; border-top: 1px solid #000; line-height: 15px; white-space: nowrap; }
    .tabs [role="tab"]:empty { padding: 0 6px 0 0; }
    .tabs [role="tab"]::after { content: ""; position: absolute; right: 0; top: 2px; height: 11px; width: 1px; background: #808080; }
    .tabs [aria-selected="true"] { font-weight: bold; color: #000; border: 0; border-bottom: 1px solid #000; border-right: 1px solid #000; padding-top: 1px; line-height: 14px; margin-right: 1px; }
    .tabs [aria-selected="true"]::after { content: none; }
    .rest { flex: 1; border-top: 1px solid #000; display: flex; justify-content: flex-end; align-items: center; gap: 8px; padding-right: 8px; }
    .rest svg { width: 7px; height: 10px; }
    .status { display: flex; align-items: center; height: 22px; background: #f0f0f0; padding-right: 19px; font-size: 11px; }
    .status > * { box-sizing: border-box; height: 22px; line-height: 22px; white-space: nowrap; }
    .ready { flex: 1; padding-left: 2px; font-size: 12px; }
    .cell { border-left: 1px solid #d8d8d8; padding-left: 5px; display: flex; align-items: center; }
    .msg { width: 133px; padding-left: 10px; gap: 17px; }
    .net { width: 179px; }
    .conn { width: 128px; }
    .gmt { width: 148px; gap: 7px; padding-left: 4px; }
    .loc { width: 142px; }
    .warn { padding-left: 4px; }
    .task { display: flex; height: 40px; background: linear-gradient(90deg, #281e1a, #10130f 14%, #1e1f17 26%, #262622 38%, #0e100e 64%, #1d1d16 82%, #0e0e0e); color: #fff; }
    .task button { position: relative; width: 48px; margin-right: 1px; display: grid; place-items: center; height: 40px; }
    .task .sys { margin-right: 0; }
    .task .last { margin-right: 3px; }
    .task .run::after { content: ""; position: absolute; left: 4px; right: 4px; bottom: 0; height: 2px; background: #76b9ed; }
    .task .active::before { content: ""; position: absolute; inset: 0 1px; background: #fff; opacity: 0.24; }
    .task .active::after { left: 1px; right: 1px; }
    .task .active svg { position: relative; }
    .task .rec { background: linear-gradient(#a85c20 38px, #ff7810 38px); }
    .clock { margin-left: auto; padding: 0 6px 0 0; text-align: center; line-height: 21px; }
    .clock time { display: block; }
    .pointer { position: absolute; left: 48%; top: 32px; width: 13px; height: 20px; }
  `;

  render() {
    return html`
      <header class="title">
        <svg class="i16" viewBox="0 0 16 16" aria-hidden="true"><rect x="0.5" y="0.5" width="15" height="15" fill="#fff" stroke="#000"/><path d="M2.500 2.500h4.500l1.500 3 1.500-3h3.500L10.500 8l3.500 5.500H9L7.500 10.500 6 13.500H2L5.500 8z" fill="#000"/></svg>
        <h1>PATrader - EURGBP  - [EURGBP, 60 min - Euro vs British Pound]</h1>
        <div class="ctl">
          <button aria-label="Minimize"><svg width="10" height="10"><path d="M0 5.500h10" stroke="#000"/></svg></button>
          <button aria-label="Restore"><svg width="10" height="10"><path d="M.5 2.500h7v7h-7zM2.500 2.500v-2h7v7h-2" fill="none" stroke="#000"/></svg></button>
          <button aria-label="Close"><svg width="10" height="10"><path d="M0 0l10 10M10 0L0 10" stroke="#000"/></svg></button>
        </div>
      </header>
      <div class="menu">
        <span class="grip"></span>
        <svg class="i16 logo" viewBox="0 0 16 16" aria-hidden="true"><rect width="16" height="16" fill="#c0c0c0"/><path d="M.5 0v15.500H16" fill="none" stroke="#108010" stroke-width="1.500"/><path d="M2 7l2 4 4-5 3 1 5-4" fill="none" stroke="#000" stroke-width="1.300"/></svg>
        <nav aria-label="Main menu">
          ${["Page", "View", "Actions", "Charts", "Quotes", "System", "Tools", "Window", "Help"].map((m) => html`<button>${m}</button>`)}
        </nav>
        <div class="child">
          <button aria-label="Minimize chart"><svg width="8" height="8"><path d="M1 6h6" stroke="#708090" stroke-width="2"/></svg></button>
          <button aria-label="Restore chart"><svg width="9" height="8"><path d="M.5 3.500h5v4h-5zM.5 4h5M3 2.500V.5h5v4H6.500M3 1h5" fill="none" stroke="#708090"/></svg></button>
          <button aria-label="Close chart"><svg width="8" height="8"><path d="M1 1l6 6M7 1L1 7" stroke="#606870" stroke-width="1.800"/></svg></button>
        </div>
      </div>
      <div class="tools">
        <span class="grip"></span>
        <div class="set draw">
          ${TOOLS.map(([n, i]) => n === "|" ? html`<span class="sep"></span>` : html`<button aria-label=${n}>${i}</button>`)}
        </div>
        <button class="more" aria-label="More tools"><svg width="9" height="6"><path d="M1 .5L3.500 3 1 5.500M5 .5L7.500 3 5 5.500" fill="none" stroke="#7070a0" stroke-width="1.300"/></svg></button>
        <span class="end"></span>
        <span class="grip"></span>
        <div class="set frames">
          ${["1m", "3m", "5m", "10m", "15m", "30m", "60m", "240", "360"].map((f) => html`<button>${f}</button>`)}
          <span class="sep"></span>
          ${["D", "W", "M"].map((f) => html`<button>${f}</button>`)}
          <span class="sep"></span>
          <button aria-label="Custom period"><svg width="13" height="13" viewBox="0 0 13 13"><circle cx="6.500" cy="6.500" r="5" fill="#fff" stroke="#000" stroke-width="2"/><path d="M6.500 3v4h3" fill="none" stroke="#000" stroke-width="1.500"/></svg></button>
        </div>
      </div>
      <price-chart class="chart"></price-chart>
      <div class="tabs" role="tablist" aria-label="Pages">
        <span class="lead" role="presentation"></span>
        ${TABS.map((t) => t
          ? html`<button role="tab" aria-selected=${t === this.tab ? "true" : "false"} @click=${() => { this.tab = t; }}>${t}</button>`
          : html`<button role="tab" aria-selected="false" aria-label="Blank page"></button>`)}
        <span class="rest" role="presentation">
          <svg viewBox="0 0 7 10"><path d="M6 .8v8.400L1.200 5z" fill="none" stroke="#404040"/></svg>
          <svg viewBox="0 0 7 10"><path d="M1 .8v8.400L5.800 5z" fill="none" stroke="#404040"/></svg>
        </span>
      </div>
      <footer class="status">
        <span class="ready">Ready</span>
        <span class="cell msg"><svg width="13" height="10"><rect x=".5" y=".5" width="12" height="9" fill="#e8e8e8" stroke="#808080"/><path d="M1 1l5.500 5L12 1M1 9l4-4M12 9L8 5" fill="none" stroke="#808080"/></svg>0 message(s)</span>
        <span class="cell net">Sent: 134 Kb/Recv: 8226 Kb</span>
        <span class="cell conn">Connected/140 ms</span>
        <span class="cell gmt"><svg class="i16" viewBox="0 0 16 16"><rect width="16" height="16" fill="#000"/><circle cx="8" cy="8" r="6" fill="#10c810"/><circle cx="8" cy="8" r="3.500" fill="#30f030"/></svg>07/11/2018 13:23 GMT</span>
        <span class="cell loc">07/11/2018 07:23:44 Local</span>
        <span class="cell warn"><svg width="18" height="16" viewBox="0 0 18 16"><rect width="18" height="16" fill="#000"/><path d="M9 2l6.500 12h-13zM9 6v4M9 11.500v1.500" fill="none" stroke="#909090" stroke-width="1.300"/></svg></span>
      </footer>
      <div class="task">
        ${APPS.map(([n, c, i]) => html`<button class=${c} aria-label=${n}>${i}</button>`)}
        <div class="clock"><time>7:23 AM</time><time>11/7/2018</time></div>
      </div>
      <svg class="pointer" viewBox="0 0 13 20" aria-hidden="true"><path d="M.8 1v15l3.500-3.300L6.700 18l2.300-1-2.300-5.200h5z" fill="#fff" stroke="#202028"/></svg>`;
  }
}
